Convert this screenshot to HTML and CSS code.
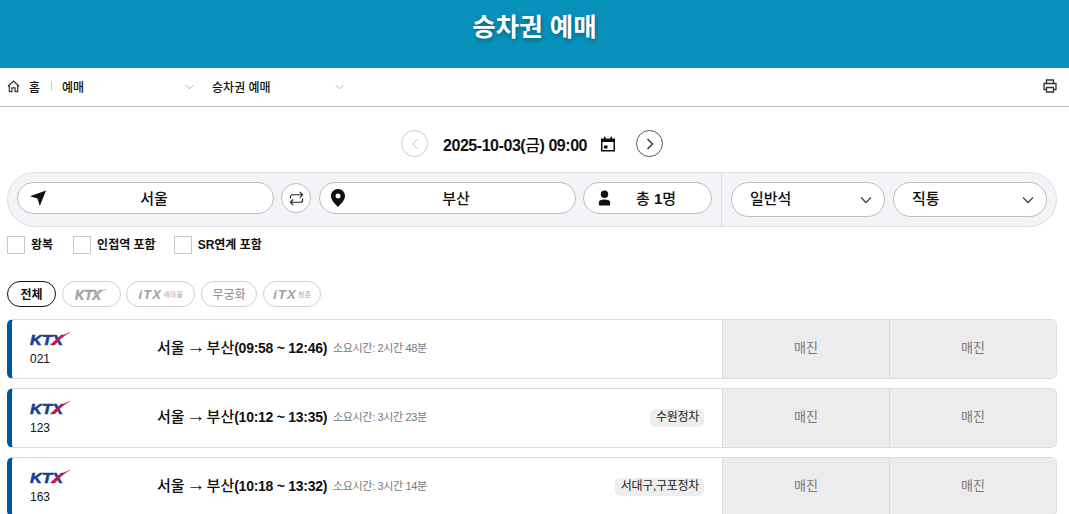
FILE: index.html
```html
<!DOCTYPE html>
<html lang="ko">
<head>
<meta charset="utf-8">
<title>승차권 예매</title>
<link rel="stylesheet" href="styles.css">
</head>
<body>
<svg class="defs" width="0" height="0" aria-hidden="true">
  <defs>
    <symbol id="ktx" viewBox="0 0 42 15">
      <text x="0" y="14" class="logo-text" textLength="33" lengthAdjust="spacingAndGlyphs">KTX</text>
      <path d="M20 14C26 7.500 34 3 41.500 .5 35 4 30 8 25 14Z" fill="#c8174f"/>
    </symbol>
    <symbol id="ktx-g" viewBox="0 0 34 12">
      <text x="0" y="11.500" class="logo-text logo-grey" textLength="26" lengthAdjust="spacingAndGlyphs">KTX</text>
      <path d="M18 6C23 3 28 1.500 33.500 1 29 2 25 4 22 7Z" fill="#b0b0b0"/>
    </symbol>
    <symbol id="chev" viewBox="0 0 12 8"><path d="M1 1.500 6 6.500 11 1.500" fill="none" stroke="currentColor" stroke-width="1.300"/></symbol>
  </defs>
</svg>
<header class="hero"><h1>승차권 예매</h1></header>

<nav class="crumbs">
  <svg class="home" viewBox="0 0 14 14"><path d="M1 6.800 7 1.200 13 6.800M2.500 5.800V12.500H5.300V8.500H8.700V12.500H11.500V5.800" fill="none" stroke="#333" stroke-width="1.300"/></svg>
  <span class="crumb-home">홈</span>
  <span class="crumb-sep"></span>
  <span class="crumb crumb-a">예매<svg class="crumb-chev"><use href="#chev"/></svg></span>
  <span class="crumb crumb-b">승차권 예매<svg class="crumb-chev"><use href="#chev"/></svg></span>
  <svg class="print" viewBox="0 0 14 14"><path d="M3.500 4.500V1H10.500V4.500M3.500 10.500H1V4.500H13V10.500H10.500M3.500 8.500H10.500V13H3.500Z" fill="none" stroke="#333" stroke-width="1.300"/></svg>
</nav>

<div class="date-row">
  <span class="round round-off"><svg viewBox="0 0 8 12"><path d="M6.500 1 1.500 6 6.500 11" fill="none" stroke="currentColor" stroke-width="1"/></svg></span>
  <strong class="date">2025-10-03(<span class="date-day">금</span>) 09:00</strong>
  <svg class="cal" viewBox="0 0 16 16"><path d="M1 2.500H4V.8H5.500V2.500H10.500V.8H12V2.500H15V15.500H1ZM2.500 6V14H13.500V6ZM4 9.500H7.500V12.500H4Z" fill="#111" fill-rule="evenodd"/></svg>
  <span class="round"><svg viewBox="0 0 8 12"><path d="M1.500 1 6.500 6 1.500 11" fill="none" stroke="currentColor" stroke-width="1.200"/></svg></span>
</div>

<section class="search">
  <div class="pill pill-station">
    <svg class="pill-icon" viewBox="0 0 16 16"><path d="M16 .5 9.800 16 7.500 8.500 0 6.300Z" fill="#111"/></svg>
    <span>서울</span>
  </div>
  <span class="swap"><svg viewBox="0 0 16 16"><path d="M1.500 8V6.500C1.500 5 2.500 4 4 4H14.500M11.500 1 14.500 4 11.500 7M14.500 8V9.500C14.500 11 13.500 12 12 12H1.500M4.500 9 1.500 12 4.500 15" fill="none" stroke="#222" stroke-width="1.200"/></svg></span>
  <div class="pill pill-station">
    <svg class="pill-icon pin" viewBox="0 0 14 18"><path d="M7 0C3 0 0 3 0 7C0 11 4 15 7 18C10 15 14 11 14 7C14 3 11 0 7 0ZM7 4.500A2.500 2.500 0 1 1 7 9.500 2.500 2.500 0 0 1 7 4.500Z" fill="#111" fill-rule="evenodd"/></svg>
    <span>부산</span>
  </div>
  <div class="pill pill-count">
    <svg class="pill-icon person" viewBox="0 0 14 16"><circle cx="7" cy="4" r="4" fill="#111"/><path d="M1 16V12.500C1 10.500 3 9.500 7 9.500S13 10.500 13 12.500V16Z" fill="#111"/></svg>
    <span>총 <b>1</b>명</span>
  </div>
  <span class="search-div"></span>
  <div class="select"><span>일반석</span><svg class="sel-chev"><use href="#chev"/></svg></div>
  <div class="select"><span>직통</span><svg class="sel-chev"><use href="#chev"/></svg></div>
</section>

<div class="checks">
  <label class="check check-1"><i></i>왕복</label>
  <label class="check check-2"><i></i>인접역 포함</label>
  <label class="check"><i></i>SR연계 포함</label>
</div>

<div class="filters">
  <span class="chip chip-on">전체</span>
  <span class="chip chip-ktx"><svg class="chip-logo"><use href="#ktx-g"/></svg></span>
  <span class="chip chip-itx1"><span class="itx">iTX</span><small>새마을</small></span>
  <span class="chip chip-mg">무궁화</span>
  <span class="chip chip-itx2"><span class="itx">iTX</span><small>청춘</small></span>
</div>

<section class="rows">
  <article class="row">
    <div class="train"><svg class="train-logo"><use href="#ktx"/></svg><span>021</span></div>
    <div class="info"><span class="route">서울<span class="arrow">→</span>부산<b>(09:58 ~ 12:46)</b></span><span class="dur">소요시간: 2시간 48분</span></div>
    <div class="seat">매진</div><div class="seat">매진</div>
  </article>
  <article class="row">
    <div class="train"><svg class="train-logo"><use href="#ktx"/></svg><span>123</span></div>
    <div class="info"><span class="route">서울<span class="arrow">→</span>부산<b>(10:12 ~ 13:35)</b></span><span class="dur">소요시간: 3시간 23분</span><span class="tag">수원정차</span></div>
    <div class="seat">매진</div><div class="seat">매진</div>
  </article>
  <article class="row">
    <div class="train"><svg class="train-logo"><use href="#ktx"/></svg><span>163</span></div>
    <div class="info"><span class="route">서울<span class="arrow">→</span>부산<b>(10:18 ~ 13:32)</b></span><span class="dur">소요시간: 3시간 14분</span><span class="tag">서대구,구포정차</span></div>
    <div class="seat">매진</div><div class="seat">매진</div>
  </article>
</section>
</body>
</html>
```

FILE: styles.css
```css
* { box-sizing: border-box; }
html { overflow: hidden; }
body {
  margin: 0;
  font-family: "Liberation Sans", "Noto Sans CJK KR", sans-serif;
  color: #111;
  background: #fff;
}
.defs { position: absolute; }
.logo-text {
  font-family: "Liberation Sans", sans-serif;
  font-weight: 700;
  font-style: italic;
  font-size: 15px;
  fill: #1b3f94;
  stroke: #1b3f94;
  stroke-width: .6px;
}
.logo-grey { fill: #a4a4a4; stroke: #a4a4a4; }

.hero {
  height: 68px;
  background: #0891bb;
  display: flex;
  justify-content: center;
  padding-top: 10px;
}
.hero h1 {
  margin: 0;
  font-size: 25.500px;
  line-height: 34px;
  font-weight: 700;
  color: #fff;
  text-shadow: 1px 2px 4px rgba(0, 0, 0, .35);
}

.crumbs {
  height: 39px;
  border-bottom: 1px solid #b9bbc0;
  display: flex;
  align-items: center;
  padding: 0 12px 2px 7px;
  font-size: 12px;
  font-weight: 500;
}
.home { width: 13px; height: 13px; margin-top: 1px; }
.crumb-home { margin-left: 9px; }
.crumb-sep { width: 1px; height: 10px; background: #ccc; margin: 0 10px 0 11px; }
.crumb { display: flex; align-items: center; justify-content: space-between; }
.crumb-a { width: 132px; margin-right: 18px; }
.crumb-b { width: 132px; }
.crumb-chev { width: 9px; height: 6px; color: #aaa; margin-top: 2px; }
.print { width: 14px; height: 14px; margin-left: auto; }

.date-row {
  margin-top: 23px;
  height: 27px;
  display: flex;
  align-items: center;
  justify-content: center;
  padding-right: 5px;
}
.round {
  width: 27px;
  height: 27px;
  border: 1px solid #555;
  border-radius: 50%;
  display: flex;
  align-items: center;
  justify-content: center;
  color: #222;
}
.round svg { width: 8px; height: 12px; }
.round-off { border-color: #ccc; color: #bbb; }
.date { font-size: 16px; margin: 0 13px 0 15px; white-space: nowrap; width: 144px; letter-spacing: -.45px; }
.date-day { font-weight: 500; }
.cal { width: 16px; height: 16px; margin-right: 20px; }

.search {
  margin: 15px 12px 0 7px;
  height: 55px;
  border: 1px solid #dfe0e4;
  border-radius: 28px;
  background: #f2f4f8;
  padding: 9px 9px 0;
  display: flex;
  align-items: flex-start;
}
.pill, .select {
  background: #fff;
  border: 1px solid #bdbdbd;
  border-radius: 17px;
  font-size: 15px;
  font-weight: 500;
  display: flex;
  align-items: center;
  position: relative;
  flex: none;
}
.pill { height: 32px; justify-content: center; padding-bottom: 2px; }
.pill-station { width: 257px; padding-left: 17px; }
.pill-count { width: 129px; margin-left: 7px; padding-left: 17px; }
.pill-count b { font-weight: 700; }
.pill-icon {
  position: absolute;
  left: 12px;
  top: 7px;
  width: 16px;
  height: 16px;
}
.pill-icon.pin { left: 11px; top: 6px; width: 14px; height: 18px; }
.pill-icon.person { left: 14px; top: 7px; width: 13px; height: 16px; }
.swap {
  flex: none;
  width: 30px;
  height: 30px;
  margin: 1px 8px 0 7px;
  border: 1px solid #bdbdbd;
  border-radius: 50%;
  background: #fff;
  display: flex;
  align-items: center;
  justify-content: center;
}
.swap svg { width: 15px; height: 15px; }
.search-div { flex: none; width: 1px; height: 53px; margin: -9px 9px 0 9px; background: #dcdde1; }
.select {
  width: 154px;
  height: 35px;
  justify-content: space-between;
  padding: 0 12px 4px 18px;
  border-radius: 18px;
}
.select + .select { margin-left: 8px; }
.sel-chev { width: 12px; height: 8px; color: #444; margin-top: 5px; }

.checks {
  margin: 9px 0 0 7px;
  height: 18px;
  display: flex;
  align-items: center;
  font-size: 12px;
  font-weight: 700;
}
.check { display: flex; align-items: center; white-space: nowrap; line-height: 16px; }
.check i { width: 18px; height: 18px; border: 1px solid #c8c8c8; background: #fff; margin-right: 6px; }
.check-1 { margin-right: 20px; }
.check-2 { margin-right: 18px; }

.filters {
  margin: 27px 0 0 7px;
  height: 26px;
  display: flex;
  gap: 6px;
}
.chip {
  height: 26px;
  border: 1px solid #d0d0d0;
  border-radius: 13px;
  font-size: 12px;
  color: #888;
  display: flex;
  align-items: center;
  justify-content: center;
  padding-bottom: 2px;
  white-space: nowrap;
}
.chip-on { width: 49px; border-color: #111; color: #111; font-weight: 700; }
.chip-ktx { width: 59px; padding-bottom: 0; }
.chip-itx1 { width: 69px; margin-left: -1px; padding-bottom: 0; }
.chip-mg { width: 56px; }
.chip-itx2 { width: 58px; padding-bottom: 0; }
.chip-logo { width: 34px; height: 12px; }
.itx { font-size: 13px; font-weight: 700; font-style: italic; color: #a0a0a0; letter-spacing: 1.200px; }
.chip small { font-size: 7px; color: #aaa; margin-left: 1px; }

.rows {
  margin: 12px 12px 0 7px;
  display: flex;
  flex-direction: column;
  gap: 9px;
}
.row {
  flex: none;
  height: 60px;
  border: 1px solid #dcdcdc;
  border-left: 5px solid #0054a6;
  border-radius: 6px;
  display: flex;
  overflow: hidden;
}
.train {
  width: 125px;
  padding: 11px 0 0 18px;
  display: flex;
  flex-direction: column;
  font-size: 12px;
  line-height: 14px;
  flex: none;
}
.train-logo { width: 42px; height: 15px; margin-bottom: 6px; }
.info {
  flex: 1;
  display: flex;
  align-items: center;
  padding: 0 18px 5px 20px;
  min-width: 0;
}
.route { font-size: 15px; font-weight: 500; white-space: nowrap; }
.arrow { font-size: 19px; line-height: 15px; margin: 0 1px 0 2px; font-weight: 400; }
.route b { font-size: 14px; font-weight: 700; letter-spacing: -.27px; }
.dur { font-size: 11px; color: #777; margin-left: 6px; white-space: nowrap; letter-spacing: -.35px; }
.tag {
  margin-left: auto;
  height: 18px;
  padding: 0 5px 0 6px;
  border-radius: 5px;
  background: #eee;
  font-size: 12px;
  letter-spacing: -.3px;
  line-height: 17px;
  white-space: nowrap;
  color: #222;
  position: relative;
  top: 2px;
}
.seat {
  width: 167px;
  flex: none;
  background: #ececec;
  border-left: 1px solid #dadada;
  color: #777;
  font-size: 13px;
  display: flex;
  align-items: center;
  justify-content: center;
  padding-bottom: 6px;
}
```
